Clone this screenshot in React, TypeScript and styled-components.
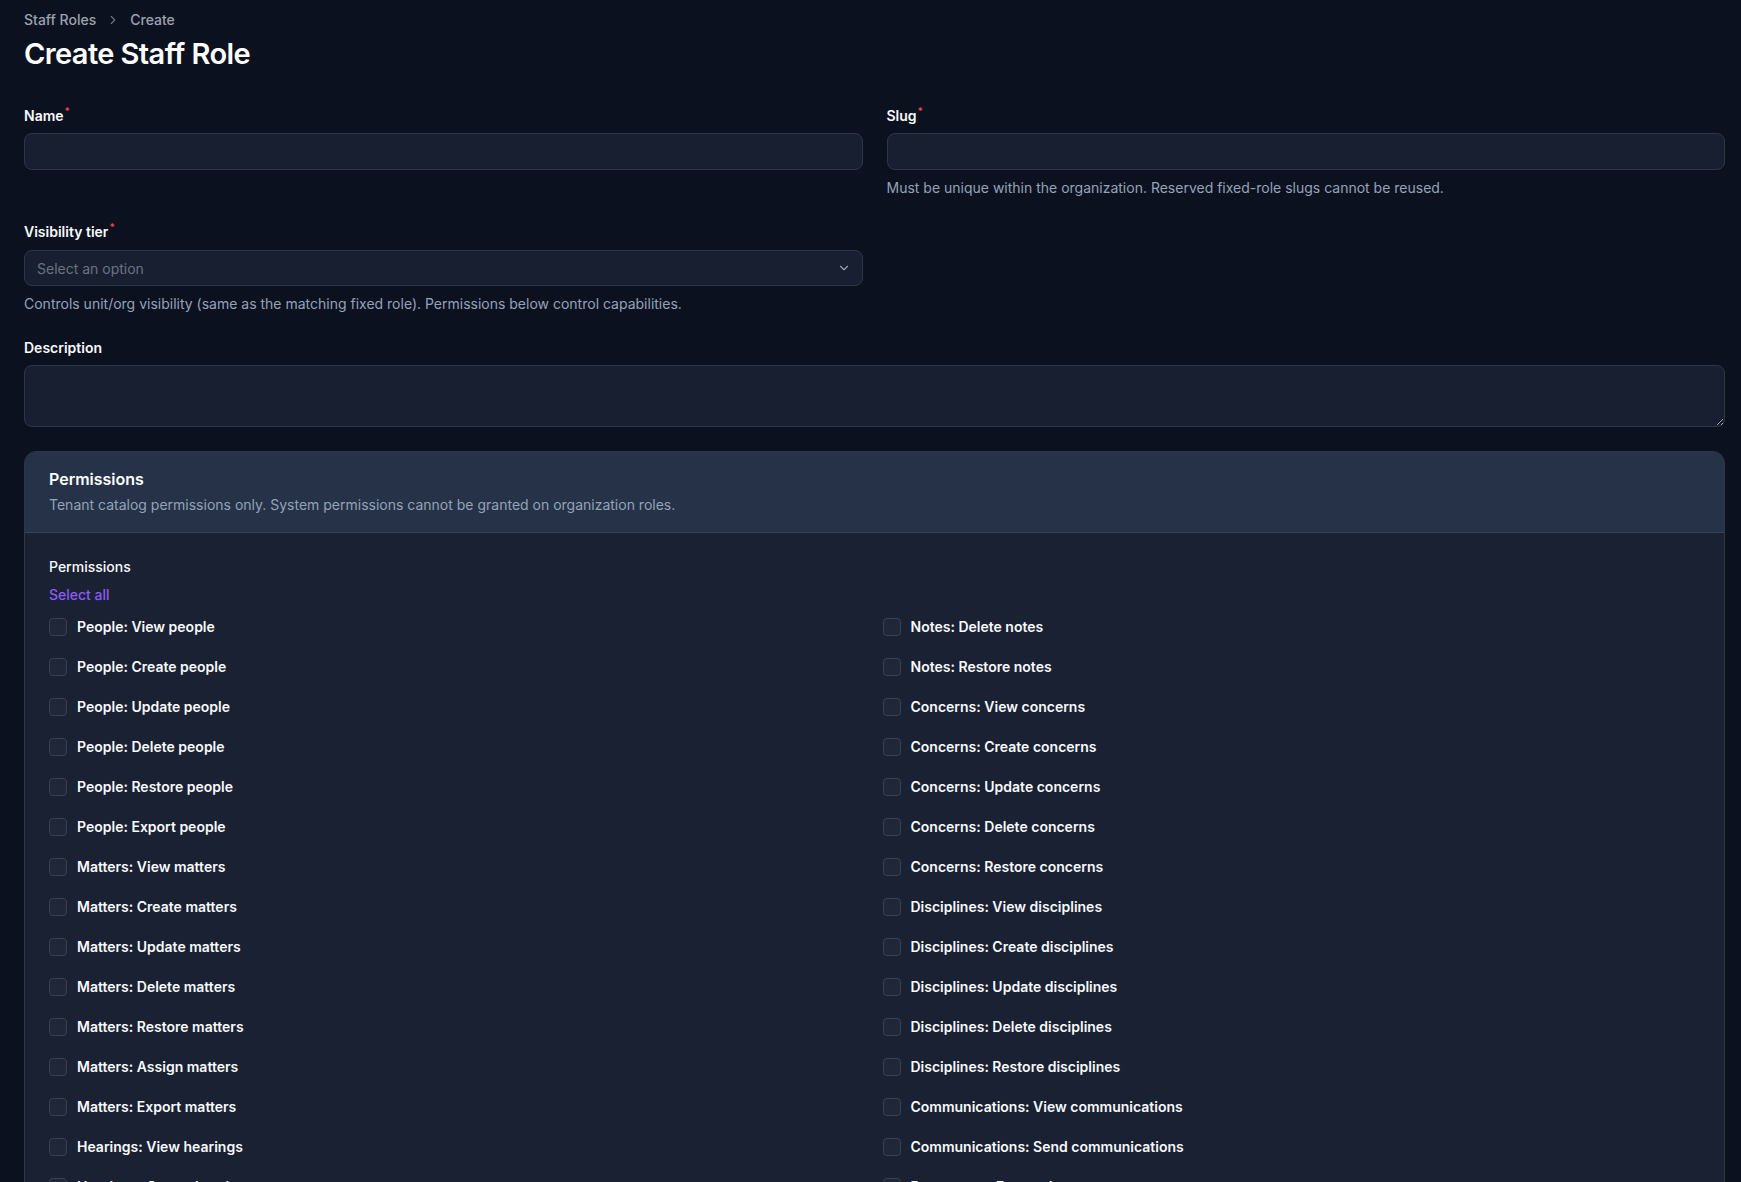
import React from 'react'
import styled, { createGlobalStyle } from 'styled-components'
import { ChevronRight, ChevronDown } from 'lucide-react'

const GlobalStyle = createGlobalStyle`
  html {
    scrollbar-width: none;
    color-scheme: dark;
  }
  body {
    margin: 0;
    background: #0c1120;
    font-family: Inter, "Noto Sans", "Liberation Sans", sans-serif;
    color: #f1f5f9;
  }
  * { box-sizing: border-box; }
`

const leftPerms = [
  'People: View people',
  'People: Create people',
  'People: Update people',
  'People: Delete people',
  'People: Restore people',
  'People: Export people',
  'Matters: View matters',
  'Matters: Create matters',
  'Matters: Update matters',
  'Matters: Delete matters',
  'Matters: Restore matters',
  'Matters: Assign matters',
  'Matters: Export matters',
  'Hearings: View hearings',
  'Hearings: Create hearings',
  'Hearings: Update hearings',
]

const rightPerms = [
  'Notes: Delete notes',
  'Notes: Restore notes',
  'Concerns: View concerns',
  'Concerns: Create concerns',
  'Concerns: Update concerns',
  'Concerns: Delete concerns',
  'Concerns: Restore concerns',
  'Disciplines: View disciplines',
  'Disciplines: Create disciplines',
  'Disciplines: Update disciplines',
  'Disciplines: Delete disciplines',
  'Disciplines: Restore disciplines',
  'Communications: View communications',
  'Communications: Send communications',
  'Documents: Export documents',
  'Documents: View documents',
]

const Page = styled.main`
  padding: 10px 16px 40px 24px;
`

const Breadcrumbs = styled.nav`
  display: flex;
  align-items: center;
  gap: 10px;
  font-size: 14px;
  line-height: 20px;
  color: #9ca3af;
  font-weight: 500;
`

const Crumb = styled.span`
  color: #9ca3af;
`

const Title = styled.h1`
  margin: 6px 0 0;
  font-size: 29px;
  line-height: 36px;
  font-weight: 600;
  letter-spacing: -0.6px;
  color: #ffffff;
`

const Form = styled.form`
  margin-top: 34px;
  display: grid;
  grid-template-columns: 1fr 1fr;
  column-gap: 24px;
  row-gap: 24px;
`

const Field = styled.div<{ $full?: boolean }>`
  display: flex;
  flex-direction: column;
  grid-column: ${p => (p.$full ? '1 / -1' : 'auto')};
`

const Label = styled.label`
  font-size: 14px;
  line-height: 20px;
  font-weight: 600;
  color: #f8fafc;
  margin-bottom: 7px;
`

const Required = styled.sup`
  color: #ef4444;
  font-size: 10px;
  line-height: 0;
  margin-left: 1px;
  vertical-align: 6px;
`

const Input = styled.input`
  height: 37px;
  width: 100%;
  background: #181f30;
  border: 1px solid #2e3749;
  border-radius: 8px;
  color: #f1f5f9;
  font: inherit;
  font-size: 14px;
  padding: 0 12px;
  outline: none;
`

const SelectBox = styled.div`
  height: 36px;
  margin-top: 1px;
  display: flex;
  align-items: center;
  justify-content: space-between;
  background: #181f30;
  border: 1px solid #2e3749;
  border-radius: 8px;
  padding: 0 11px 0 12px;
  font-size: 14px;
  color: #6b7280;
`

const TextArea = styled.textarea`
  height: 62px;
  width: 100%;
  resize: vertical;
  background: #181f30;
  border: 1px solid #2e3749;
  border-radius: 8px;
  color: #f1f5f9;
  font: inherit;
  font-size: 14px;
  padding: 8px 12px;
  outline: none;
`

const Hint = styled.p`
  margin: 8px 0 0;
  font-size: 14px;
  line-height: 20px;
  color: #94a3b8;
`

const Card = styled.section`
  grid-column: 1 / -1;
  border: 1px solid #2c3749;
  border-radius: 12px;
  overflow: hidden;
  background: #1a2133;
`

const CardHeader = styled.header`
  background: #253247;
  border-bottom: 1px solid #36435a;
  padding: 15px 24px 17px;
`

const CardTitle = styled.h2`
  margin: 0;
  font-size: 16px;
  line-height: 24px;
  font-weight: 600;
  color: #ffffff;
`

const CardSub = styled.p`
  margin: 4px 0 0;
  font-size: 14px;
  line-height: 20px;
  color: #94a3b8;
`

const CardBody = styled.div`
  padding: 24px 24px 24px;
`

const GroupLabel = styled.div`
  font-size: 14px;
  line-height: 20px;
  font-weight: 500;
  color: #f8fafc;
`

const SelectAll = styled.button`
  margin-top: 8px;
  padding: 0;
  background: none;
  border: none;
  font: inherit;
  font-size: 14px;
  line-height: 20px;
  font-weight: 500;
  color: #8b5cf6;
  cursor: pointer;
`

const CheckList = styled.div<{ $rows: number }>`
  margin-top: 12px;
  display: grid;
  grid-template-columns: 1fr 1fr;
  grid-template-rows: repeat(${p => p.$rows}, 20px);
  grid-auto-flow: column;
  column-gap: 16px;
  row-gap: 20px;
`

const CheckItem = styled.label`
  display: flex;
  align-items: center;
  gap: 10px;
  font-size: 14px;
  line-height: 20px;
  font-weight: 600;
  color: #f8fafc;
`

const Box = styled.input`
  appearance: none;
  margin: 0;
  width: 18px;
  height: 18px;
  border: 1px solid #364155;
  border-radius: 4px;
  background: #1f2739;
  flex-shrink: 0;
`

const App = () => {
  const all = [...leftPerms, ...rightPerms]
  return (
    <>
      <GlobalStyle />
      <Page>
        <Breadcrumbs>
          <Crumb>Staff Roles</Crumb>
          <ChevronRight size={14} color="#6b7280" />
          <Crumb>Create</Crumb>
        </Breadcrumbs>
        <Title>Create Staff Role</Title>

        <Form onSubmit={e => e.preventDefault()}>
          <Field>
            <Label>Name<Required>*</Required></Label>
            <Input />
          </Field>
          <Field>
            <Label>Slug<Required>*</Required></Label>
            <Input />
            <Hint>Must be unique within the organization. Reserved fixed-role slugs cannot be reused.</Hint>
          </Field>

          <Field>
            <Label>Visibility tier<Required>*</Required></Label>
            <SelectBox>
              <span>Select an option</span>
              <ChevronDown size={14} color="#9ca3af" />
            </SelectBox>
            <Hint>Controls unit/org visibility (same as the matching fixed role). Permissions below control capabilities.</Hint>
          </Field>
          <div />

          <Field $full>
            <Label>Description</Label>
            <TextArea />
          </Field>

          <Card>
            <CardHeader>
              <CardTitle>Permissions</CardTitle>
              <CardSub>Tenant catalog permissions only. System permissions cannot be granted on organization roles.</CardSub>
            </CardHeader>
            <CardBody>
              <GroupLabel>Permissions</GroupLabel>
              <SelectAll type="button">Select all</SelectAll>
              <CheckList $rows={leftPerms.length}>
                {all.map(p => (
                  <CheckItem key={p}>
                    <Box type="checkbox" />
                    {p}
                  </CheckItem>
                ))}
              </CheckList>
            </CardBody>
          </Card>
        </Form>
      </Page>
    </>
  )
}

export default App
